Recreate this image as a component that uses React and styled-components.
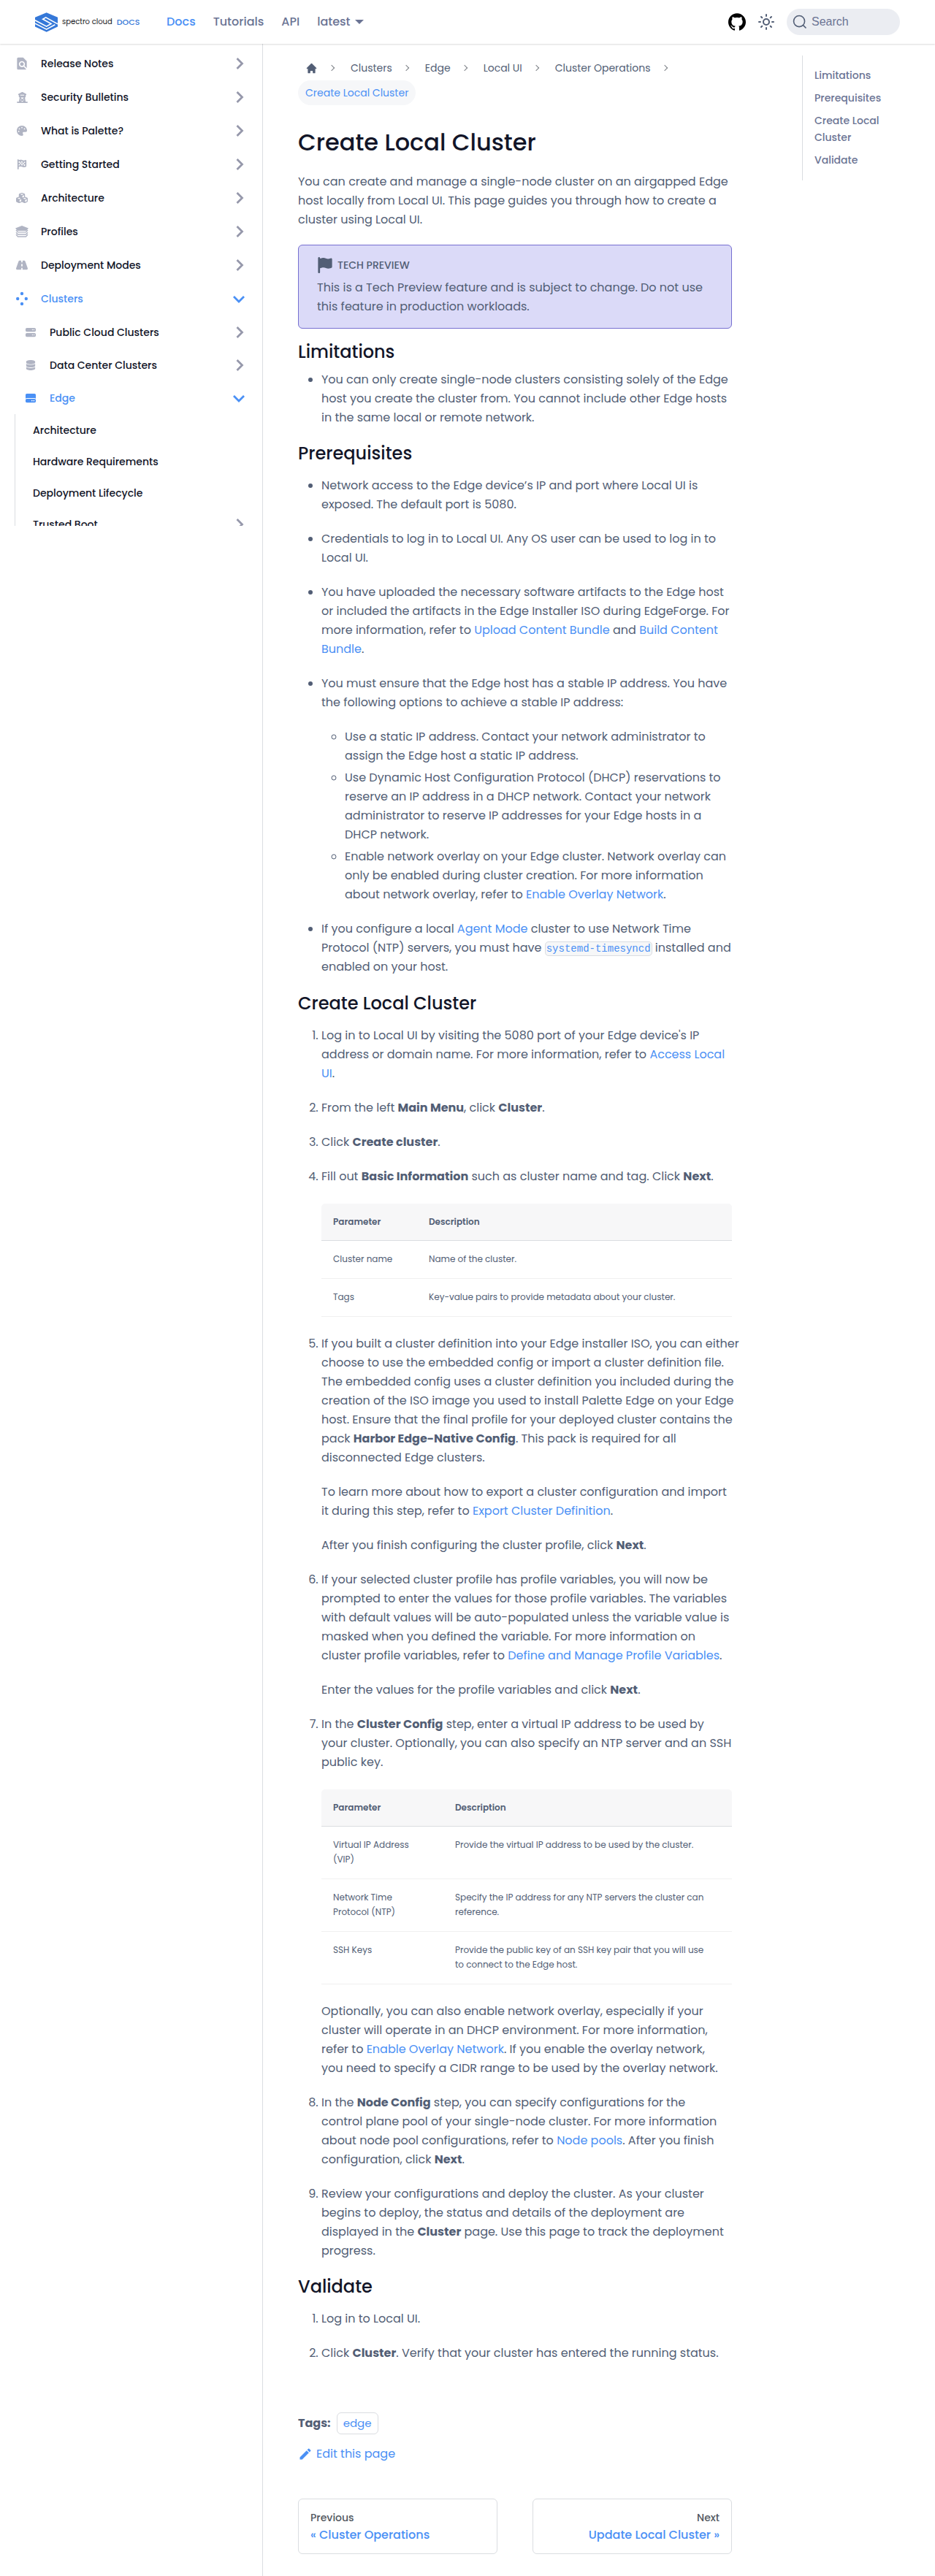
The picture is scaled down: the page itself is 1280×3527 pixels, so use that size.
import React from "react";
import styled, { createGlobalStyle, css } from "styled-components";
import { FaPalette, FaFlagCheckered, FaTowerObservation, FaRoad, FaServer, FaDatabase, FaHardDrive, FaCubes, FaFlag } from "react-icons/fa6";
import { MdFindInPage, MdEdit } from "react-icons/md";
import { HiHome } from "react-icons/hi";

const ink = "#121528";
const body = "#525e75";
const blue = "#4a90f5";
const muted = "#6b7494";
const line = "#dadde1";

const GlobalStyle = createGlobalStyle`
  *, *::before, *::after { box-sizing: border-box; }
  body {
    margin: 0;
    background: #fff;
    color: ${body};
    font: 400 16px/26px Poppins, Inter, sans-serif;
  }
`;

const Header = styled.header`
  position: relative;
  z-index: 1;
  display: flex;
  align-items: center;
  height: 60px;
  padding: 0 48px;
  background: #fff;
  box-shadow: 0 1px 2px rgba(0, 0, 0, 0.15);
`;

const Brand = styled.a`
  display: flex;
  align-items: center;
  gap: 6px;
  width: 156px;
  margin-right: 12px;
  color: #17181c;
  font-size: 10px;
  white-space: nowrap;
  text-decoration: none;
`;

const BrandDocs = styled.span`
  color: #3578d8;
  font-size: 11px;
  font-weight: 500;
`;

const NavLinks = styled.nav`
  display: flex;
  flex: 1;
`;

const NavLink = styled.a`
  display: flex;
  align-items: center;
  gap: 6px;
  padding: 0 12px;
  color: ${(p) => (p.$active ? blue : muted)};
  font-weight: 500;
  text-decoration: none;
`;

const Caret = styled.span`
  border: 6px solid transparent;
  border-top-color: ${muted};
  border-bottom: 0;
`;

const Tools = styled.div`
  display: flex;
  align-items: center;
  gap: 12px;
`;

const IconButton = styled.button`
  display: flex;
  padding: 0;
  border: 0;
  background: none;
  color: #525e75;
`;

const IconLink = styled.a`
  display: flex;
  margin-right: 4px;
  color: #000;
`;

const SearchButton = styled.button`
  display: flex;
  align-items: center;
  gap: 6px;
  width: 155px;
  height: 36px;
  margin-left: 4px;
  padding: 0 8px;
  border: 0;
  border-radius: 18px;
  background: #ebedf2;
  color: #6b7494;
  font: 400 16px "Liberation Sans", sans-serif;
`;

const Columns = styled.div`
  display: flex;
`;

const Sidebar = styled.aside`
  flex: none;
  width: 360px;
  border-right: 1px solid ${line};
`;

const SideScroll = styled.nav`
  max-height: 660px;
  padding: 4px 8px 0;
  overflow: hidden;
`;

const SideList = styled.ul`
  margin: 0;
  padding: 0;
  list-style: none;
`;

const SideLink = styled.a`
  display: flex;
  align-items: center;
  gap: 18px;
  height: ${(p) => (p.$plain ? 43 : p.$level ? 45 : 46)}px;
  padding: 0 15px 0 ${(p) => (p.$plain ? 24 : p.$level ? 26 : 14)}px;
  color: ${(p) => (p.$open ? blue : ink)};
  font-size: 14px;
  font-weight: 500;
  text-decoration: none;
`;

const SideIcon = styled.span`
  display: flex;
  flex: none;
  justify-content: center;
  width: 16px;
  color: ${(p) => (p.$open ? blue : "#b0b4c3")};

  > svg { flex: none; }
`;

const SideLabel = styled.span`
  flex: 1;
`;

const NestedList = styled(SideList)`
  margin-left: 12px;
  border-left: 1px solid ${line};
`;

const Main = styled.main`
  display: flex;
  flex: 1;
  gap: 96px;
  min-width: 0;
  padding: 0 48px 32px;
`;

const Article = styled.article`
  flex: 1;
  min-width: 0;
`;

const Crumbs = styled.ol`
  display: flex;
  flex-wrap: wrap;
  margin: 16px 0 31px;
  padding: 0;
  list-style: none;
`;

const Crumb = styled.li`
  display: flex;
  align-items: center;
  font-size: 14px;

  &:not(:last-child)::after {
    width: 6px;
    height: 6px;
    margin: 0 13px 0 6px;
    border: solid #7d8187;
    border-width: 1px 1px 0 0;
    transform: rotate(45deg);
    content: "";
  }
`;

const CrumbLink = styled.a`
  display: flex;
  align-items: center;
  height: 34px;
  padding: 0 10px;
  border-radius: 17px;
  background: ${(p) => (p.$current ? "#f6f7f9" : "none")};
  color: ${(p) => (p.$current ? blue : body)};
  text-decoration: none;
`;

const Title = styled.h1`
  margin: 0 0 21px;
  color: ${ink};
  font-size: 32px;
  font-weight: 500;
  line-height: 40px;
`;

const Heading = styled.h2`
  margin: ${(p) => (p.$tight ? "16px 0 9px" : "20px 0 15px")};
  color: ${ink};
  font-size: 24px;
  font-weight: 500;
  line-height: 32px;
`;

const Text = styled.p`
  margin: 0 0 21px;
`;

const Verse = styled(Text)`
  white-space: nowrap;
`;

const Link = styled.a`
  color: ${blue};
  text-decoration: none;
`;

const Notice = styled.section`
  padding: 16px 25px;
  border: 1px solid #766fd0;
  border-radius: 6px;
  background: #dbdaf8;
`;

const NoticeTitle = styled.div`
  display: flex;
  align-items: center;
  gap: 6px;
  margin-bottom: 7px;
  font-size: 14px;
  font-weight: 500;
  line-height: 22px;
`;

const NoticeText = styled.p`
  margin: 0;
`;

const listBox = css`
  margin: 0;
  padding-left: 32px;

  > li + li { margin-top: ${(p) => (p.$tight ? 4 : 21)}px; }
`;

const Bullets = styled.ul`${listBox}`;
const Steps = styled.ol`${listBox}`;

const Code = styled.code`
  padding: 1px;
  border: 1px solid ${line};
  border-radius: 5px;
  background: #f6f7f8;
  color: ${blue};
  font: 14px "Liberation Mono", monospace;
`;

const Table = styled.table`
  width: 100%;
  margin: 24px 0;
  border-spacing: 0;
  font-size: 12px;
  line-height: 20px;
  text-align: left;

  th, td {
    padding: 15px 16px;
    vertical-align: top;
  }
  th {
    border-bottom: 1px solid ${line};
    background: #f7f7f8;
    font-weight: 600;
  }
  th:first-child { width: ${(p) => p.$first}px; border-radius: 5px 0 0 0; }
  th:last-child { border-radius: 0 5px 0 0; }
  td {
    padding-bottom: 16px;
    border-bottom: 1px solid #f0f0f0;
  }
`;

const Tags = styled.div`
  display: flex;
  align-items: center;
  gap: 8px;
  margin-top: 68px;
`;

const Tag = styled.a`
  padding: 1px 8px;
  border: 1px solid ${line};
  border-radius: 6px;
  color: ${blue};
  font-size: 15px;
  text-decoration: none;
`;

const Edit = styled.a`
  display: flex;
  align-items: center;
  gap: 5px;
  width: fit-content;
  margin: 14px 0 48px;
  color: ${blue};
  text-decoration: none;
`;

const Pager = styled.nav`
  display: grid;
  grid-template-columns: 1fr 1fr;
  gap: 48px;
`;

const PagerLink = styled.a`
  padding: 14px 16px;
  border: 1px solid ${line};
  border-radius: 6px;
  color: ${blue};
  font-weight: 500;
  line-height: 23px;
  text-align: ${(p) => (p.$next ? "right" : "left")};
  text-decoration: none;
`;

const PagerHint = styled.div`
  color: #525860;
  font-size: 14px;
`;

const Toc = styled.nav`
  align-self: flex-start;
  width: 134px;
  margin-top: 16px;
  padding: 12px 0 12px 16px;
  border-left: 1px solid ${line};
`;

const TocLink = styled.a`
  display: block;
  padding: 4px 0;
  color: ${muted};
  font-size: 14px;
  font-weight: 500;
  line-height: 23px;
  text-decoration: none;
`;

const Chevron = ({ down }) => (
  <svg width="18" height="18" viewBox="0 0 18 18" fill="none" stroke={down ? blue : "#9698ab"} strokeWidth="2.8" aria-hidden="true">
    <path d={down ? "M2 6l7 7 7-7" : "M6.500 2l7 7-7 7"} />
  </svg>
);

const Logo = () => (
  <svg width="31" height="27" viewBox="0 0 93 80" aria-hidden="true">
    <path d="M0 20L47 0 93 20V58L47 80 0 58z" fill="#3578d8" />
    <path d="M93 47L44 20 32 27 66 46 47 57 0 32M0 45L47 69 82 50" fill="none" stroke="#fff" strokeWidth="5" />
  </svg>
);

const GithubMark = () => (
  <svg width="24" height="24" viewBox="0 0 24 24" aria-hidden="true">
    <path fill="currentColor" d="M12 .297c-6.630 0-12 5.373-12 12 0 5.303 3.438 9.800 8.205 11.385.6.113.82-.258.82-.577 0-.285-.01-1.040-.015-2.040-3.338.724-4.042-1.610-4.042-1.610C4.422 18.070 3.633 17.700 3.633 17.700c-1.087-.744.084-.729.084-.729 1.205.084 1.838 1.236 1.838 1.236 1.070 1.835 2.809 1.305 3.495.998.108-.776.417-1.305.76-1.605-2.665-.3-5.466-1.332-5.466-5.930 0-1.310.465-2.380 1.235-3.220-.135-.303-.54-1.523.105-3.176 0 0 1.005-.322 3.300 1.230.96-.267 1.980-.399 3-.405 1.020.006 2.040.138 3 .405 2.280-1.552 3.285-1.230 3.285-1.230.645 1.653.24 2.873.12 3.176.765.840 1.230 1.910 1.230 3.220 0 4.610-2.805 5.625-5.475 5.920.42.360.81 1.096.81 2.220 0 1.606-.015 2.896-.015 3.286 0 .315.210.690.825.570C20.565 22.092 24 17.592 24 12.297c0-6.627-5.373-12-12-12" />
  </svg>
);

const Sun = () => (
  <svg width="24" height="24" viewBox="0 0 24 24" fill="none" stroke="currentColor" strokeWidth="2" strokeLinecap="round" aria-hidden="true">
    <circle cx="12" cy="12" r="4" />
    <path d="M12 2v2M12 20v2M2 12h2M20 12h2M5 5l1.300 1.300M17.700 17.700L19 19M5 19l1.300-1.300M17.700 6.300L19 5" />
  </svg>
);

const SearchGlyph = () => (
  <svg width="20" height="20" viewBox="0 0 20 20" fill="none" stroke="#525e75" strokeWidth="1.600" aria-hidden="true">
    <path d="M14.386 14.386l4.088 4.088-4.088-4.088c-2.942 2.942-7.711 2.942-10.653 0s-2.942-7.711 0-10.653 7.711-2.942 10.653 0 2.942 7.711 0 10.653z" />
  </svg>
);

const ClusterDots = () => (
  <svg width="16" height="20" viewBox="0 0 16 20" fill="currentColor" aria-hidden="true">
    <circle cx="8" cy="3" r="2.200" /><circle cx="8" cy="17" r="2.200" />
    <circle cx="2.200" cy="10" r="2.200" /><circle cx="13.800" cy="10" r="2.200" />
  </svg>
);

const Layers = () => (
  <svg width="18" height="16" viewBox="0 0 18 16" fill="currentColor" aria-hidden="true">
    <path d="M9 0l9 3.500L15 7H3L0 3.500z" />
    <path d="M1 6l2.500 2.800h11L17 6M1 9.200L3.500 12h11L17 9.200M1 12l2.500 3h11l2.500-3" fill="none" stroke="currentColor" strokeWidth="1.300" />
  </svg>
);

const sections = [
  { label: "Release Notes", icon: <MdFindInPage size={20} /> },
  { label: "Security Bulletins", icon: <FaTowerObservation size={15} /> },
  { label: "What is Palette?", icon: <FaPalette size={14} /> },
  { label: "Getting Started", icon: <FaFlagCheckered size={14} /> },
  { label: "Architecture", icon: <FaCubes size={16} /> },
  { label: "Profiles", icon: <Layers /> },
  { label: "Deployment Modes", icon: <FaRoad size={16} /> },
  { label: "Clusters", icon: <ClusterDots />, open: true },
  { label: "Public Cloud Clusters", icon: <FaServer size={14} />, level: 1 },
  { label: "Data Center Clusters", icon: <FaDatabase size={14} />, level: 1 },
  { label: "Edge", icon: <FaHardDrive size={14} />, level: 1, open: true },
];

const edgePages = ["Architecture", "Hardware Requirements", "Deployment Lifecycle", "Trusted Boot"];
const trail = ["Clusters", "Edge", "Local UI", "Cluster Operations"];

const ParameterTable = ({ first, rows }) => (
  <Table $first={first}>
    <thead><tr><th scope="col">Parameter</th><th scope="col">Description</th></tr></thead>
    <tbody>
      {rows.map(([name, description], i) => (
        <tr key={i}><td>{name}</td><td>{description}</td></tr>
      ))}
    </tbody>
  </Table>
);

export default function App() {
  return (
    <>
      <GlobalStyle />
      <Header>
        <Brand href="#">
          <Logo />
          <span>spectro cloud</span>
          <BrandDocs>DOCS</BrandDocs>
        </Brand>
        <NavLinks>
          <NavLink href="#" $active>Docs</NavLink>
          <NavLink href="#">Tutorials</NavLink>
          <NavLink href="#">API</NavLink>
          <NavLink href="#">latest<Caret /></NavLink>
        </NavLinks>
        <Tools>
          <IconLink href="#" aria-label="GitHub repository"><GithubMark /></IconLink>
          <IconButton aria-label="Switch theme"><Sun /></IconButton>
          <SearchButton><SearchGlyph />Search</SearchButton>
        </Tools>
      </Header>
      <Columns>
        <Sidebar>
          <SideScroll>
            <SideList>
              {sections.map((s) => (
                <li key={s.label}>
                  <SideLink href="#" $open={s.open} $level={s.level}>
                    <SideIcon $open={s.open}>{s.icon}</SideIcon>
                    <SideLabel>{s.label}</SideLabel>
                    <Chevron down={s.open} />
                  </SideLink>
                </li>
              ))}
            </SideList>
            <NestedList>
              {edgePages.map((label) => (
                <li key={label}>
                  <SideLink href="#" $plain>
                    <SideLabel>{label}</SideLabel>
                    {label === "Trusted Boot" && <Chevron />}
                  </SideLink>
                </li>
              ))}
            </NestedList>
          </SideScroll>
        </Sidebar>
        <Main>
          <Article>
            <Crumbs>
              <Crumb><CrumbLink href="#" aria-label="Home"><HiHome size={17} /></CrumbLink></Crumb>
              {trail.map((label) => (
                <Crumb key={label}><CrumbLink href="#">{label}</CrumbLink></Crumb>
              ))}
              <Crumb><CrumbLink href="#" $current>Create Local Cluster</CrumbLink></Crumb>
            </Crumbs>
            <Title>Create Local Cluster</Title>
            <Text>
              You can create and manage a single-node cluster on an airgapped Edge host locally from Local UI. This page
              guides you through how to create a cluster using Local UI.
            </Text>
            <Notice>
              <NoticeTitle><FaFlag size={22} />TECH PREVIEW</NoticeTitle>
              <NoticeText>
                This is a Tech Preview feature and is subject to change. Do not use this feature in production workloads.
              </NoticeText>
            </Notice>
            <Heading $tight>Limitations</Heading>
            <Bullets>
              <li>
                You can only create single-node clusters consisting solely of the Edge host you create the cluster from.
                You cannot include other Edge hosts in the same local or remote network.
              </li>
            </Bullets>
            <Heading>Prerequisites</Heading>
            <Bullets>
              <li>Network access to the Edge device’s IP and port where Local UI is exposed. The default port is 5080.</li>
              <li>Credentials to log in to Local UI. Any OS user can be used to log in to Local UI.</li>
              <li>
                You have uploaded the necessary software artifacts to the Edge host or included the artifacts in the Edge
                Installer ISO during EdgeForge. For more information, refer to <Link href="#">Upload Content Bundle</Link>{" "}
                and <Link href="#">Build Content Bundle</Link>.
              </li>
              <li>
                <Text>
                  You must ensure that the Edge host has a stable IP address. You have the following options to achieve a
                  stable IP address:
                </Text>
                <Bullets $tight>
                  <li>Use a static IP address. Contact your network administrator to assign the Edge host a static IP address.</li>
                  <li>
                    Use Dynamic Host Configuration Protocol (DHCP) reservations to reserve an IP address in a DHCP
                    network. Contact your network administrator to reserve IP addresses for your Edge hosts in a DHCP
                    network.
                  </li>
                  <li>
                    Enable network overlay on your Edge cluster. Network overlay can only be enabled during cluster
                    creation. For more information about network overlay, refer to{" "}
                    <Link href="#">Enable Overlay Network</Link>.
                  </li>
                </Bullets>
              </li>
              <li>
                <Verse>
                  If you configure a local <Link href="#">Agent Mode</Link> cluster to use Network Time<br />
                  Protocol (NTP) servers, you must have <Code>systemd-timesyncd</Code> installed and<br />
                  enabled on your host.
                </Verse>
              </li>
            </Bullets>
            <Heading>Create Local Cluster</Heading>
            <Steps>
              <li>
                Log in to Local UI by visiting the 5080 port of your Edge device's IP address or domain name. For more
                information, refer to <Link href="#">Access Local UI</Link>.
              </li>
              <li>From the left <b>Main Menu</b>, click <b>Cluster</b>.</li>
              <li>Click <b>Create cluster</b>.</li>
              <li>
                <Text>Fill out <b>Basic Information</b> such as cluster name and tag. Click <b>Next</b>.</Text>
                <ParameterTable
                  first={131}
                  rows={[
                    ["Cluster name", "Name of the cluster."],
                    ["Tags", "Key-value pairs to provide metadata about your cluster."],
                  ]}
                />
              </li>
              <li>
                <Verse>
                  If you built a cluster definition into your Edge installer ISO, you can either<br />
                  choose to use the embedded config or import a cluster definition file.<br />
                  The embedded config uses a cluster definition you included during the<br />
                  creation of the ISO image you used to install Palette Edge on your Edge<br />
                  host. Ensure that the final profile for your deployed cluster contains the<br />
                  pack <b>Harbor Edge-Native Config</b>. This pack is required for all<br />
                  disconnected Edge clusters.
                </Verse>
                <Text>
                  To learn more about how to export a cluster configuration and import it during this step, refer to{" "}
                  <Link href="#">Export Cluster Definition</Link>.
                </Text>
                <Text>After you finish configuring the cluster profile, click <b>Next</b>.</Text>
              </li>
              <li>
                <Text>
                  If your selected cluster profile has profile variables, you will now be prompted to enter the values for
                  those profile variables. The variables with default values will be auto-populated unless the variable
                  value is masked when you defined the variable. For more information on cluster profile variables, refer
                  to <Link href="#">Define and Manage Profile Variables</Link>.
                </Text>
                <Text>Enter the values for the profile variables and click <b>Next</b>.</Text>
              </li>
              <li>
                <Text>
                  In the <b>Cluster Config</b> step, enter a virtual IP address to be used by your cluster. Optionally, you
                  can also specify an NTP server and an SSH public key.
                </Text>
                <ParameterTable
                  first={167}
                  rows={[
                    ["Virtual IP Address (VIP)", "Provide the virtual IP address to be used by the cluster."],
                    [<>Network Time<br />Protocol (NTP)</>, "Specify the IP address for any NTP servers the cluster can reference."],
                    ["SSH Keys", <>Provide the public key of an SSH key pair that you will use<br />to connect to the Edge host.</>],
                  ]}
                />
                <Verse>
                  Optionally, you can also enable network overlay, especially if your<br />
                  cluster will operate in an DHCP environment. For more information,<br />
                  refer to <Link href="#">Enable Overlay Network</Link>. If you enable the overlay network,<br />
                  you need to specify a CIDR range to be used by the overlay network.
                </Verse>
              </li>
              <li>
                <Verse>
                  In the <b>Node Config</b> step, you can specify configurations for the<br />
                  control plane pool of your single-node cluster. For more information<br />
                  about node pool configurations, refer to <Link href="#">Node pools</Link>. After you finish<br />
                  configuration, click <b>Next</b>.
                </Verse>
              </li>
              <li>
                Review your configurations and deploy the cluster. As your cluster begins to deploy, the status and details
                of the deployment are displayed in the <b>Cluster</b> page. Use this page to track the deployment progress.
              </li>
            </Steps>
            <Heading>Validate</Heading>
            <Steps>
              <li>Log in to Local UI.</li>
              <li>Click <b>Cluster</b>. Verify that your cluster has entered the running status.</li>
            </Steps>
            <Tags><b>Tags:</b><Tag href="#">edge</Tag></Tags>
            <Edit href="#"><MdEdit size={20} />Edit this page</Edit>
            <Pager>
              <PagerLink href="#"><PagerHint>Previous</PagerHint>« Cluster Operations</PagerLink>
              <PagerLink href="#" $next><PagerHint>Next</PagerHint>Update Local Cluster »</PagerLink>
            </Pager>
          </Article>
          <Toc>
            {["Limitations", "Prerequisites", "Create Local Cluster", "Validate"].map((label) => (
              <TocLink href="#" key={label}>{label}</TocLink>
            ))}
          </Toc>
        </Main>
      </Columns>
    </>
  );
}
